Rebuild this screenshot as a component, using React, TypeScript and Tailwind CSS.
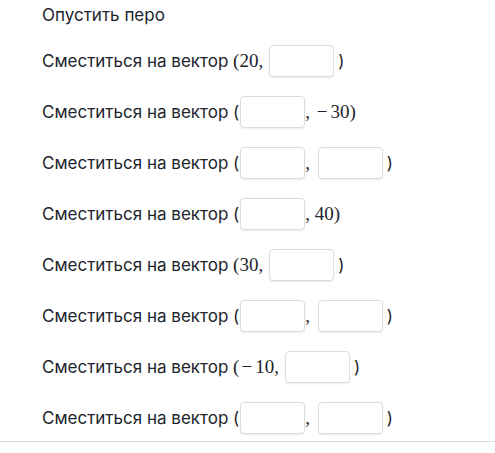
import React from "react";

const Box = () => (
  <span className="block w-[65px] h-[32px] rounded-[4px] border border-[#dcdcdc] bg-white shadow-[0_1px_2px_rgba(0,0,0,0.08)]" />
);

const M = ({ children }: { children: React.ReactNode }) => (
  <span className="text-[19px] leading-[24px] text-[#21242c]" style={{ fontFamily: '"Liberation Serif", "DejaVu Serif", serif' }}>
    {children}
  </span>
);

type Part = "box" | string;

const rows: [Part, Part][] = [
  ["20", "box"],
  ["box", "−30"],
  ["box", "box"],
  ["box", "40"],
  ["30", "box"],
  ["box", "box"],
  ["−10", "box"],
  ["box", "box"],
];

const Num = ({ v }: { v: string }) =>
  v.startsWith("−") ? (
    <>
      <span className="ml-[2px] mr-[3px]">−</span>
      {v.slice(1)}
    </>
  ) : (
    <>{v}</>
  );

function Row({ a, b }: { a: Part; b: Part }) {
  return (
    <div className="h-[32px] flex items-center whitespace-pre">
      <span>Сместиться на вектор </span>
      {a === "box" ? (
        <>
          <span>(</span>
          <span className="ml-[1px]"><Box /></span>
        </>
      ) : (
        <M>
          (<Num v={a} />,
        </M>
      )}
      {a === "box" ? <M>, </M> : <span className="w-[4px]" />}
      {b === "box" ? (
        <>
          <span className={a === "box" ? "mr-[4px] ml-[3px]" : "mr-[4px] ml-[2px]"}><Box /></span>
          <span>)</span>
        </>
      ) : (
        <M>
          <Num v={b} />)
        </M>
      )}
    </div>
  );
}

export default function App() {
  return (
    <div className="w-[495px] h-[453px] bg-white text-[#21242c] text-[17px] leading-[24px]" style={{ fontFamily: 'Inter, "Noto Sans", sans-serif' }}>
      <div className="pl-[42px] flex flex-col gap-[19px]">
        <div className="h-[26px] pt-[4px] flex items-center">Опустить перо</div>
        {rows.map((r, i) => (
          <Row key={i} a={r[0]} b={r[1]} />
        ))}
      </div>
      <div className="mt-[7px] border-t border-[#dcdcdc]" />
    </div>
  );
}
